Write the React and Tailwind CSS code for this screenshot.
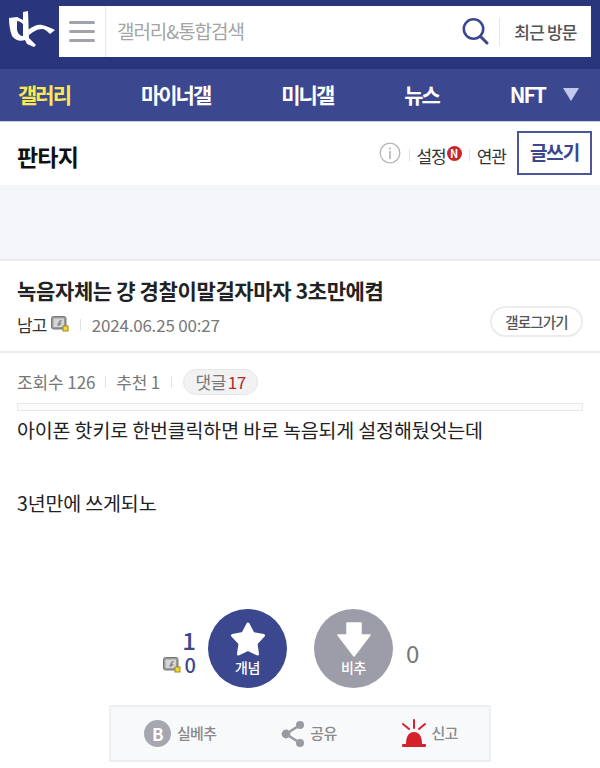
const font = { fontFamily: '"Noto Sans CJK KR", "Noto Sans", sans-serif' };

function Logo() {
  return (
    <svg width="50" height="50" viewBox="9 6 50 50" className="shrink-0">
      <path d="M9 18 L17 17 L23 20 L23 12 L28 11 L29 38 L36 45 L34 47 L27 44 L25 40 C20 42 15 40 12 36 C10 31 9 24 9 18 Z M17 21 L17 30 C18 34 20 36 23 36 L23 24 C21 22 19 21 17 21 Z" fill="#fff" fillRule="evenodd" />
      <path d="M28 30 C33 26 38 24 42 25 C47 26 51 28 55 30 L50 34 C47 31 45 29 42 29 C37 29 33 32 29 35 Z" fill="#fff" />
    </svg>
  );
}

function GonIcon({ className = "" }) {
  return (
    <svg width="18" height="16" viewBox="0 0 18 16" className={className}>
      <rect x="0.5" y="0.5" width="14.5" height="12.5" rx="2" fill="#9a9a9a" stroke="#777" />
      <rect x="2.5" y="2.5" width="10.5" height="8.5" fill="#d5d5d5" />
      <path d="M6 9 L9 4 L11 4 L9 7 L11 7 L8 10 Z" fill="#8a8a8a" />
      <rect x="12" y="10" width="5" height="5" fill="#f5d63d" stroke="#a08a10" />
    </svg>
  );
}

function Sep({ className = "" }) {
  return <span className={`w-px h-3 bg-[#e2e2e2] ${className}`} />;
}

export default function App() {
  return (
    <div className="w-[600px] h-[768px] overflow-hidden bg-white flex flex-col" style={font}>
      {/* search header */}
      <header className="h-[69px] bg-[#29367c] flex items-start pt-[6px] pl-[9px] pr-[9px] shrink-0">
        <div className="w-[50px] h-[50px] flex items-center shrink-0"><Logo /></div>
        <div className="flex-1 h-[51px] bg-white flex items-center">
          <div className="w-[47px] h-full border-r border-[#e6e8ee] flex flex-col items-center justify-center gap-[6px] shrink-0">
            <span className="w-[26px] h-[3px] bg-[#a0a2ad] rounded-sm" />
            <span className="w-[26px] h-[3px] bg-[#a0a2ad] rounded-sm" />
            <span className="w-[26px] h-[3px] bg-[#a0a2ad] rounded-sm" />
          </div>
          <div className="flex-1 pl-[11px] text-[19px] tracking-[-1.05px] text-[#a4a4a4]">갤러리&통합검색</div>
          <svg width="27" height="27" viewBox="0 0 27 27" className="mr-[10px]">
            <circle cx="11.5" cy="11" r="9.7" fill="none" stroke="#3b4890" strokeWidth="2.6" />
            <path d="M18.5 18.5 L25 25" stroke="#3b4890" strokeWidth="3" strokeLinecap="round" />
          </svg>
          <span className="w-px h-7 bg-[#e9e9e9]" />
          <div className="w-[91px] text-center text-[17px] font-medium tracking-[-0.8px] text-[#555]">최근 방문</div>
        </div>
      </header>

      {/* nav */}
      <nav className="h-[53px] bg-[#3b4890] border-b border-[#c9cfe6] flex items-center gap-[71px] pl-[18px] text-[21px] font-bold tracking-[-2px] text-white shrink-0 whitespace-nowrap">
        <div className="text-[#ffe84f]">갤러리</div>
        <div>마이너갤</div>
        <div>미니갤</div>
        <div>뉴스</div>
        <div className="flex items-center gap-[18px]">
          <span>NFT</span>
          <svg width="16" height="14" viewBox="0 0 16 14"><path d="M0 0 H16 L8 13 Z" fill="#c3c8ed" /></svg>
        </div>
      </nav>

      {/* gallery title */}
      <div className="h-[63px] flex items-center pl-[17px] pr-[8px] shrink-0">
        <h1 className="flex-1 text-[23px] font-bold tracking-[-0.8px] text-[#111] pt-[5px]">판타지</h1>
        <svg width="22" height="22" viewBox="0 0 22 22" className="mr-[8px] mb-[2px]">
          <circle cx="11" cy="11" r="9.8" fill="none" stroke="#b5b5b5" strokeWidth="1.3" />
          <rect x="10.2" y="9" width="1.6" height="8" fill="#b5b5b5" />
          <rect x="10.2" y="5.5" width="1.6" height="2" fill="#b5b5b5" />
        </svg>
        <Sep className="mt-[2px]" />
        <span className="ml-[6px] pt-[4px] text-[17px] tracking-[-1px] text-[#333]">설정</span>
        <span className="ml-[1px] mb-[1px] w-[15px] h-[15px] rounded-full bg-[#c8262c] text-white text-[11px] font-bold flex items-center justify-center leading-none">N</span>
        <Sep className="mx-[7px] mt-[2px]" />
        <span className="pt-[4px] text-[17px] tracking-[-1px] text-[#333]">연관</span>
        <div className="ml-[11px] w-[75px] h-[44px] mb-[2px] border-2 border-[#4a5698] flex items-center justify-center text-[19px] font-bold tracking-[-1.2px] text-[#3b4890]">글쓰기</div>
      </div>

      {/* ad band */}
      <div className="h-[75px] bg-[#f3f5f9] shrink-0" />

      {/* post head */}
      <div className="h-[90px] border-t-2 border-b-2 border-[#ececec] box-content -mt-px pl-[17px] pr-[17px] shrink-0 flex flex-col">
        <h2 className="mt-[15px] text-[21px] font-bold tracking-[-0.36px] leading-[28px] text-[#222]">녹음자체는 걍 경찰이말걸자마자 3초만에켬</h2>
        <div className="mt-[8px] flex items-center">
          <span className="text-[17px] tracking-[-0.8px] text-[#333]">남고</span>
          <GonIcon className="ml-[4px] mb-[2px]" />
          <Sep className="ml-[11px] mr-[11px]" />
          <span className="flex-1 text-[17px] text-[#777] tracking-[-0.2px]">2024.06.25 00:27</span>
          <div className="w-[93px] h-[31px] rounded-full border-2 border-[#ececec] flex items-center justify-center text-[14.5px] font-medium tracking-[-0.8px] text-[#555] -mt-[6px]">갤로그가기</div>
        </div>
      </div>

      {/* stats */}
      <div className="pl-[17px] pr-[17px] shrink-0">
        <div className="mt-[16px] h-[26px] flex items-center text-[17px] text-[#777]">
          <span className="tracking-[-0.1px]">조회수 126</span>
          <Sep className="mx-[10px]" />
          <span className="tracking-[-0.2px]">추천 1</span>
          <Sep className="mx-[11px]" />
          <span className="h-[26px] w-[75px] justify-center rounded-full bg-[#f2f2f2] border border-[#e6e6e6] flex items-center tracking-[-0.5px]">
            댓글<span className="ml-[2px] text-[#b32d2d]">17</span>
          </span>
        </div>
        <div className="mt-[8px] h-[8px] border border-[#e8e8e8] bg-[#fbfbfb]" />
      </div>

      {/* body */}
      <div className="pl-[17px] text-[19.5px] leading-[27px] tracking-[-0.15px] text-[#222] shrink-0 pt-[5px]">
        <p>아이폰 핫키로 한번클릭하면 바로 녹음되게 설정해뒀엇는데</p>
        <p className="mt-[46px]">3년만에 쓰게되노</p>
      </div>

      {/* votes */}
      <div className="mt-[92px] flex items-center justify-center shrink-0 h-[80px] pl-[2px]">
        <div className="flex flex-col items-end mr-[12px] text-[#3b4890] w-[40px] pt-[8px] font-medium">
          <span className="text-[24px] leading-[26px]">1</span>
          <span className="flex items-center text-[20px] leading-[24px]"><GonIcon className="mr-[4px]" />0</span>
        </div>
        <div className="w-[79px] h-[79px] rounded-full bg-[#3b4890] flex flex-col items-center text-white">
          <svg width="36" height="36" viewBox="0 0 36 36" className="mt-[12px]">
            <path d="M18 3 L23 12.5 L33.5 14.5 L26 22.5 L27.5 33 L18 28.5 L8.5 33 L10 22.5 L2.5 14.5 L13 12.5 Z" fill="#fff" stroke="#fff" strokeWidth="3" strokeLinejoin="round" />
          </svg>
          <span className="text-[14px] font-medium tracking-[-0.5px] leading-[18px] mt-[1px]">개념</span>
        </div>
        <div className="w-[79px] h-[79px] rounded-full bg-[#9c9da8] flex flex-col items-center text-white ml-[27px]">
          <svg width="34" height="36" viewBox="0 0 34 36" className="mt-[12px]">
            <path d="M10 2 H24 V14 H33 L17 35 L1 14 H10 Z" fill="#fff" stroke="#fff" strokeWidth="1.5" strokeLinejoin="round" />
          </svg>
          <span className="text-[14px] font-medium tracking-[-0.5px] leading-[18px] mt-[1px]">비추</span>
        </div>
        <div className="w-[40px] ml-[13px] pt-[9px] text-[24px] text-[#777]">0</div>
      </div>

      {/* action bar */}
      <div className="mt-[17px] mx-auto w-[382px] h-[57px] bg-[#f8f9fb] border-2 border-[#eeeff2] flex items-center pl-[33px] text-[15px] font-medium tracking-[-0.7px] text-[#8a8a8a] shrink-0">
        <span className="w-[27px] h-[27px] rounded-full bg-[#a5a6b0] text-white text-[17px] font-bold flex items-center justify-center leading-none">B</span>
        <span className="ml-[6px]">실베추</span>
        <svg width="24" height="28" viewBox="0 0 24 28" className="ml-[65px]">
          <path d="M19 5 L5 14 L19 23" fill="none" stroke="#9a9aa3" strokeWidth="2.6" />
          <circle cx="19" cy="5" r="4" fill="#9a9aa3" />
          <circle cx="5" cy="14" r="4.4" fill="#9a9aa3" />
          <circle cx="19" cy="23" r="4" fill="#9a9aa3" />
        </svg>
        <span className="ml-[5px]">공유</span>
        <svg width="26" height="29" viewBox="0 0 26 29" className="ml-[64px]">
          <path d="M5 25 C5 17 8 13 13 13 C18 13 21 17 21 25 Z" fill="#d3222a" />
          <rect x="1" y="25" width="24" height="3" rx="1" fill="#d3222a" />
          <path d="M13 1 V9 M2 5 L8 10 M24 5 L18 10" stroke="#d3222a" strokeWidth="2" strokeLinecap="round" />
        </svg>
        <span className="ml-[5px]">신고</span>
      </div>
    </div>
  );
}
